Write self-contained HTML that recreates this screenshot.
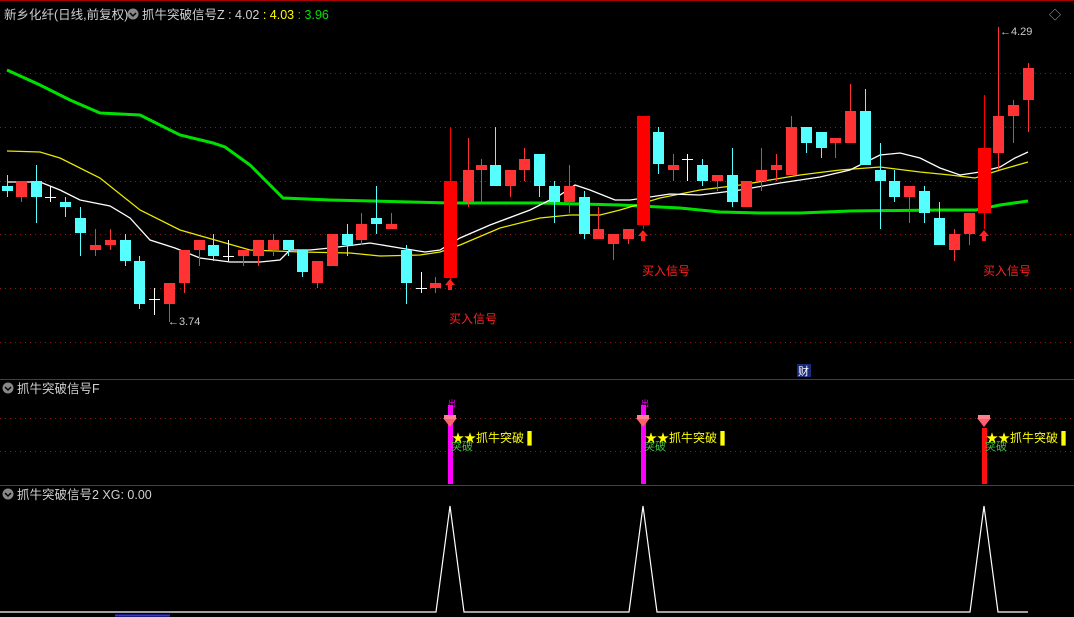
<!DOCTYPE html>
<html><head><meta charset="utf-8">
<style>
html,body{margin:0;padding:0;background:#000;width:1074px;height:617px;overflow:hidden}
svg{display:block}
text{font-family:"Liberation Sans","Noto Sans CJK SC",sans-serif}
</style></head>
<body>
<svg id="s" width="1074" height="617" viewBox="0 0 1074 617" xmlns="http://www.w3.org/2000/svg">
<rect width="1074" height="617" fill="#000"/>
<g stroke="#8b1a1a" stroke-width="1" stroke-dasharray="1,4">
<line x1="0" y1="127.5" x2="1074" y2="127.5"/>
<line x1="0" y1="181.5" x2="1074" y2="181.5"/>
<line x1="0" y1="234.5" x2="1074" y2="234.5"/>
<line x1="0" y1="288.5" x2="1074" y2="288.5"/>
<line x1="0" y1="342.5" x2="1074" y2="342.5"/>
<line x1="0" y1="73.5" x2="1074" y2="73.5"/>
<line x1="0" y1="418.5" x2="1074" y2="418.5"/>
<line x1="0" y1="451.5" x2="1074" y2="451.5"/>
</g>
<line x1="0" y1="0.5" x2="1074" y2="0.5" stroke="#a00" />
<line x1="0" y1="379.5" x2="1074" y2="379.5" stroke="#b01010"/>
<line x1="0" y1="485.5" x2="1074" y2="485.5" stroke="#b01010"/>
<g fill="none" stroke-width="2">
<polyline stroke="#00e000" stroke-width="3" points="7,70 40,85 70,100 100,113 140,115 180,135 213,143 225,147 250,165 283,198 330,200 450,203 540,203 620,205 680,208 720,212 760,213 800,213 850,211 940,210 976,210 1000,205 1028,201"/>
<polyline stroke="#e8e800" stroke-width="1.3" points="7,151 40,152 60,158 100,178 140,210 180,230 250,250 300,252 350,253 380,256 420,255 440,252 460,245 500,228 540,218 570,215 600,215 620,210 660,198 700,190 740,185 770,180 800,175 840,170 880,167 920,172 950,175 975,178 1000,170 1028,162"/>
<polyline stroke="#fff" stroke-width="1.3" points="7,182 40,182 60,190 80,200 110,206 130,218 150,240 175,248 200,258 230,262 260,262 280,260 290,250 310,250 330,248 370,243 400,248 425,252 440,250 460,238 490,225 530,210 560,195 575,185 590,190 615,200 630,200 670,194 700,195 740,190 780,183 820,177 850,170 880,155 900,153 920,158 940,168 960,175 980,172 1000,167 1015,158 1028,152"/>
</g>
<g id="c"></g>
<g fill="#ff2020">
<polygon points="450,279 445,285 448,285 448,290 452,290 452,285 455,285"/>
<polygon points="643,230 638,236 641,236 641,241 645,241 645,236 648,236"/>
<polygon points="984,230 979,236 982,236 982,241 986,241 986,236 989,236"/>
</g>
<text x="449" y="323" fill="#ff2020" font-size="12">买入信号</text>
<text x="642" y="275" fill="#ff2020" font-size="12">买入信号</text>
<text x="983" y="275" fill="#ff2020" font-size="12">买入信号</text>
<text x="168" y="325" fill="#ccc" font-size="11">←3.74</text>
<text x="1000" y="35" fill="#ccc" font-size="11">←4.29</text>
<rect x="797" y="364" width="14" height="13" fill="#1a2a7a"/>
<text x="798" y="375" fill="#fff" font-size="11">财</text>
<text x="1049" y="19" fill="#aaa" font-size="12">◇</text>
<circle cx="133" cy="14" r="5.5" fill="#888"/><path d="M130,13 l3,3 l3,-3" stroke="#000" stroke-width="1.5" fill="none"/>
<text x="4" y="19" font-size="12.5"><tspan fill="#d0d0d0">新乡化纤(日线,前复权)</tspan></text>
<text x="142" y="19" font-size="12.5"><tspan fill="#d0d0d0">抓牛突破信号Z : 4.02 </tspan><tspan fill="#ffff00">: 4.03 </tspan><tspan fill="#00e000">: 3.96</tspan></text>
<circle cx="8" cy="388" r="5.5" fill="#888"/><path d="M5,387 l3,3 l3,-3" stroke="#000" stroke-width="1.5" fill="none"/>
<text x="17" y="393" fill="#d0d0d0" font-size="12.5">抓牛突破信号F</text>
<circle cx="8" cy="494" r="5.5" fill="#888"/><path d="M5,493 l3,3 l3,-3" stroke="#000" stroke-width="1.5" fill="none"/>
<text x="17" y="499" fill="#d0d0d0" font-size="12.5">抓牛突破信号2 XG: 0.00</text>
<g id="sig"></g>
<polyline fill="none" stroke="#fff" stroke-width="1.2" points="0,612 436,612 450,506 464,612 629,612 643,506 657,612 970,612 984,506 998,612 1028,612"/>
<line x1="115" y1="615.5" x2="170" y2="615.5" stroke="#3030ff" stroke-width="2"/>
</svg>
<script>
var d=[[7,175,186,191,197,'c'],[21,181,181,197,202,'r'],[36,165,181,197,223,'c'],[50,186,197,197,202,'w'],[65,197,202,207,217,'c'],[80,207,218,233,256,'c'],[95,229,245,250,256,'r'],[110,229,240,245,250,'r'],[125,234,240,261,266,'c'],[139,256,261,304,309,'c'],[154,288,299,299,315,'w'],[169,283,283,304,322,'r'],[184,250,250,283,293,'r'],[199,240,240,250,266,'r'],[213,234,245,256,261,'c'],[228,240,256,256,261,'w'],[243,250,250,256,266,'r'],[258,240,240,256,266,'r'],[273,234,240,250,256,'r'],[288,240,240,250,256,'c'],[302,250,250,272,277,'c'],[317,261,261,283,288,'r'],[332,234,234,266,266,'r'],[347,224,234,245,256,'c'],[361,213,224,240,245,'r'],[376,186,218,224,234,'c'],[391,213,224,229,229,'r'],[406,245,250,283,304,'c'],[421,272,288,288,293,'w'],[435,277,283,288,293,'r'],[450,127,181,278,283,'R'],[468,138,170,202,207,'r'],[481,159,165,170,202,'r'],[495,127,165,186,186,'c'],[510,170,170,186,197,'r'],[524,148,159,170,181,'r'],[539,154,154,186,197,'c'],[554,181,186,202,223,'c'],[569,165,186,202,213,'r'],[584,191,197,234,239,'c'],[598,207,229,239,239,'r'],[613,234,234,244,260,'r'],[628,229,229,239,244,'r'],[643,116,116,225,229,'R'],[658,127,132,164,174,'c'],[673,154,165,170,181,'r'],[687,154,159,159,181,'w'],[702,159,165,181,186,'c'],[717,175,175,181,191,'r'],[732,148,175,202,207,'c'],[746,181,181,207,207,'r'],[761,148,170,181,191,'r'],[776,154,165,170,181,'r'],[791,116,127,175,175,'r'],[806,127,127,143,153,'c'],[821,132,132,148,158,'c'],[835,138,138,143,158,'r'],[850,84,111,143,143,'r'],[865,89,111,165,165,'c'],[880,143,170,181,229,'c'],[894,170,181,197,202,'c'],[909,186,186,197,223,'r'],[924,186,191,213,223,'c'],[939,202,218,245,245,'c'],[954,229,234,250,261,'r'],[969,213,213,234,245,'r'],[984,95,148,213,229,'R'],[998,27,116,153,170,'r'],[1013,100,105,116,143,'r'],[1028,63,68,100,132,'r']];
var h='';
d.forEach(function(a){var x=a[0],t=a[5];var col=t=='c'?'#55ffff':t=='w'?'#fff':(t=='R'?'#ff0000':'#ff3333');
h+='<line x1="'+(x+.5)+'" y1="'+a[1]+'" x2="'+(x+.5)+'" y2="'+a[4]+'" stroke="'+col+'" stroke-width="1"/>';
if(t=='w'){h+='<line x1="'+(x-5)+'" y1="'+(a[2]+.5)+'" x2="'+(x+6)+'" y2="'+(a[2]+.5)+'" stroke="#fff"/>';}
else{var w=t=='R'?13:11;h+='<rect x="'+(x-(w-1)/2)+'" y="'+a[2]+'" width="'+w+'" height="'+Math.max(2,a[3]-a[2])+'" fill="'+col+'"/>';}
});
document.getElementById('c').innerHTML=h;
var s='';
[[450,'#ff00ff',1],[643,'#ff00ff',1],[984,'#ff1010',0]].forEach(function(b){var x=b[0];
s+='<rect x="'+(x-2)+'" y="'+(b[2]?405:428)+'" width="5" height="'+(b[2]?79:56)+'" fill="'+b[1]+'"/>';
if(b[2])s+='<text x="'+(x-2)+'" y="406" fill="#ff00ff" font-size="8">出</text>';
s+='<polygon points="'+(x-7)+','+418+' '+(x+7)+',418 '+x+',427" fill="#ff6070"/><rect x="'+(x-6)+'" y="415" width="12" height="4" fill="#ff8090"/>';
s+='<text x="'+(x+1)+'" y="450" fill="#40c040" font-size="11">突破</text>';
s+='<text x="'+(x+2)+'" y="442" fill="#ffff00" font-size="12">★★抓牛突破 ▌</text>';});
document.getElementById('sig').innerHTML=s;
</script>
</body></html>
